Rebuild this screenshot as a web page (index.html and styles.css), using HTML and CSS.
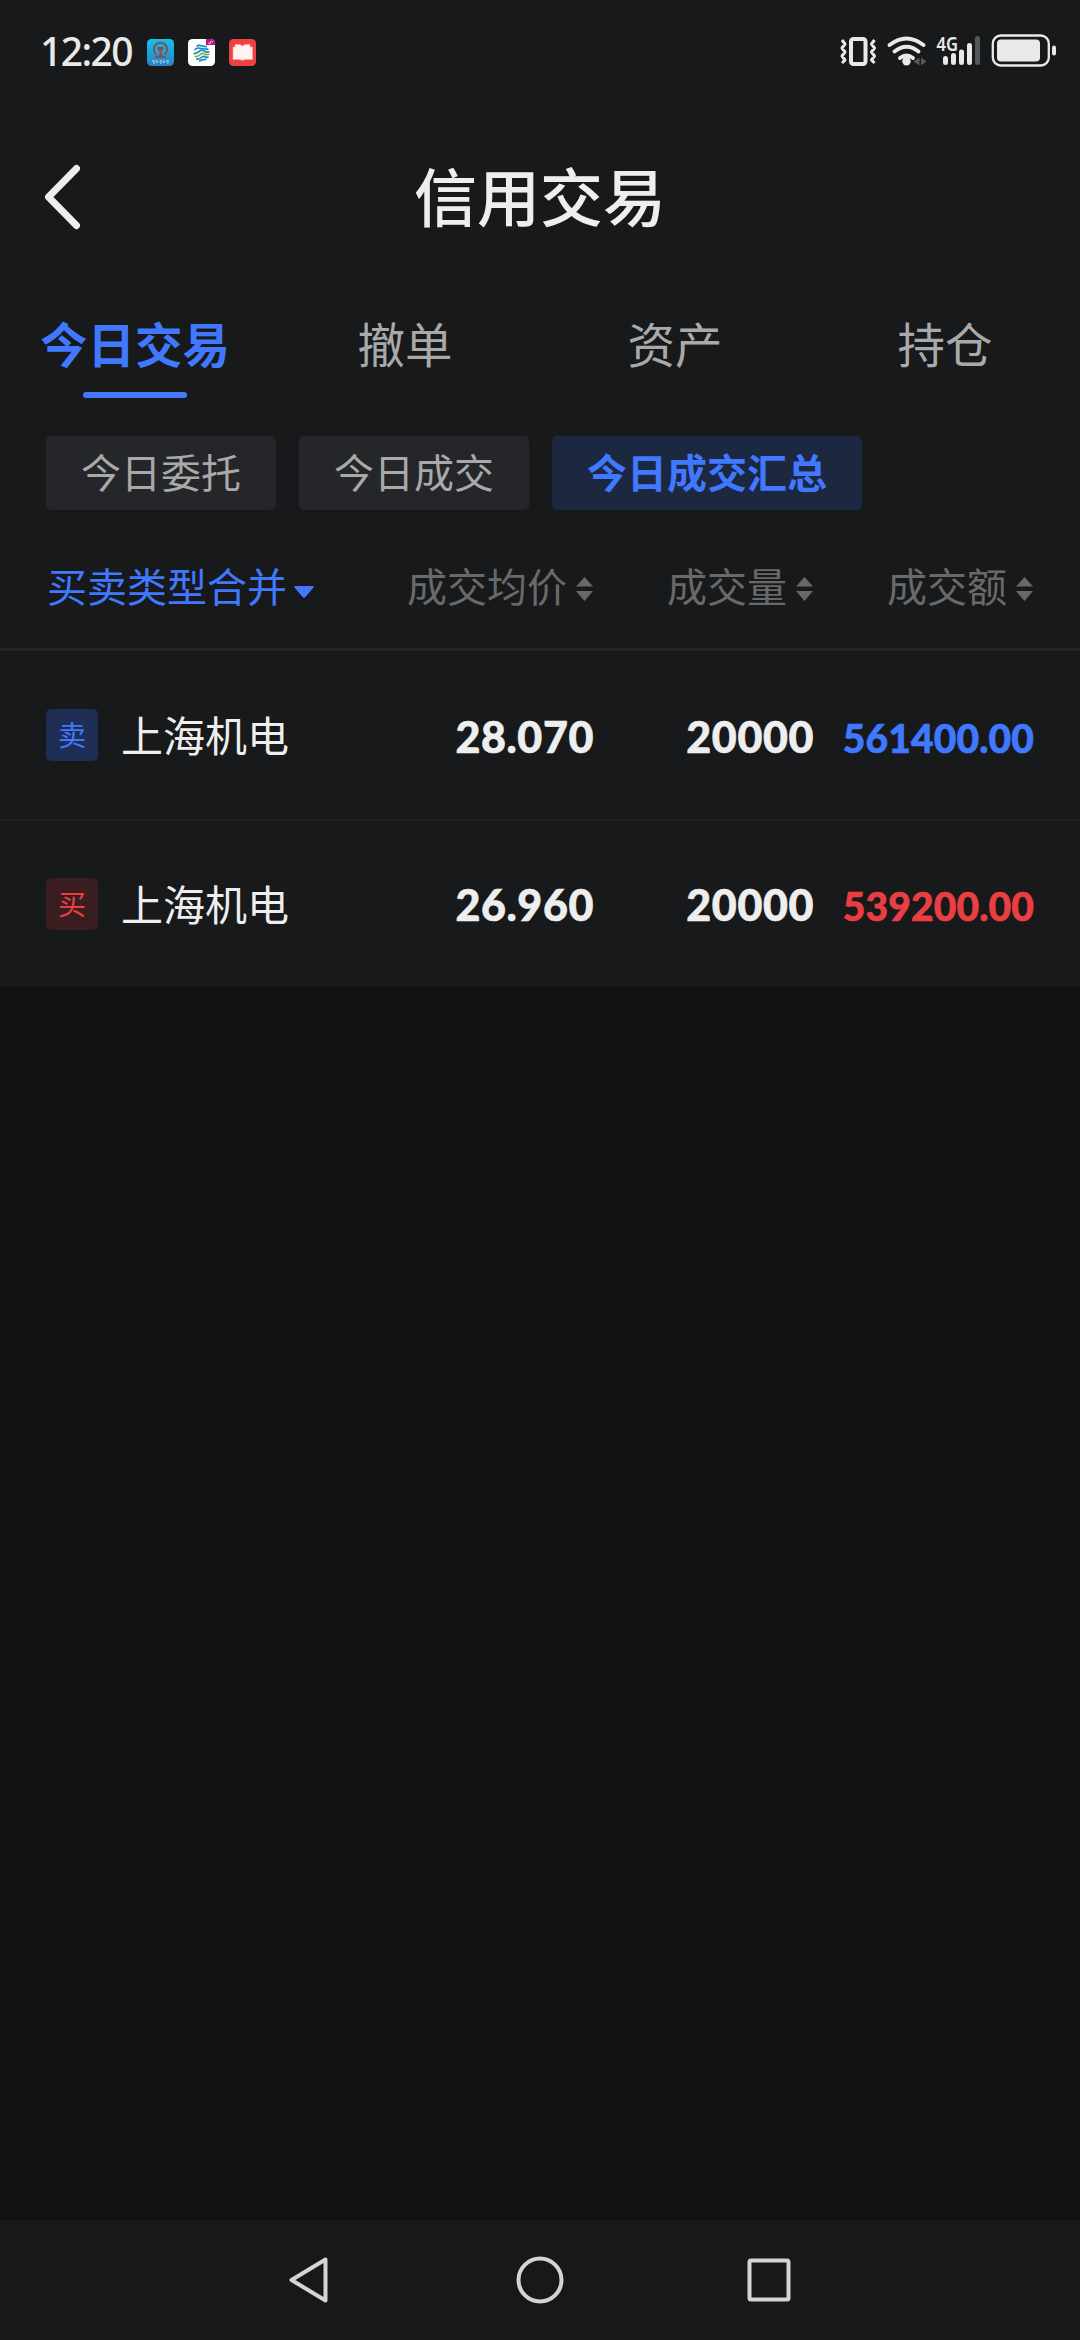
FILE: index.html
```html
<!DOCTYPE html>
<html lang="zh-CN">
<head>
<meta charset="utf-8">
<title>信用交易</title>
<link rel="stylesheet" href="styles.css">
</head>
<body>
<div class="screen">
  <div class="panel">
    <div class="status">
      <span class="clock">12:20</span>
      <div class="notices">
        <svg class="app" viewBox="0 0 27 27">
          <defs><linearGradient id="sky" x1="0" y1="0" x2="0" y2="1"><stop offset="0" stop-color="#0fc4ee"/><stop offset="1" stop-color="#2f7fc4"/></linearGradient></defs>
          <rect width="27" height="27" rx="4.5" fill="url(#sky)"/>
          <path d="M9.500 15.500A6.600 6.600 0 1 1 17.500 15.500" fill="none" stroke="#8c4d52" stroke-width="2"/>
          <path d="M10.500 8h6v2.500l-2 1.500v4l4.500 1.500v1.500h-11v-1.500l4.500-1.500v-4l-2-1.500z" fill="#8c4d52"/>
          <path d="M5 22h3.500M6 24h2M10 21.500v2.500M12.500 22h3M13 24h2M17 21.500v2.500M19 22h3M20 24h1.500" stroke="#b9e2f6" stroke-width="1.200"/>
        </svg>
        <svg class="app" viewBox="0 0 27 27">
          <rect width="27" height="27" rx="4.500" fill="#fff"/>
          <path d="M18 0h4.500A4.500 4.500 0 0 1 27 4.500V6h-9z" fill="#c0127f"/>
          <path d="M20 3.500l2 1.500 1-3 2 1" fill="none" stroke="#f3b5dc" stroke-width="1"/>
          <g fill="none" stroke-width="1.700">
            <path d="M8.500 7.500C12 4 14 8.500 19 7.500M6.500 11C11 6 14 11.500 20.500 10" stroke="#1b86c4"/>
            <path d="M5.500 14.500C12 15 11 9.500 15 11.500S19 13.500 21.500 12.500" stroke="#1b86c4"/>
            <path d="M6.500 17.500C13 18.500 12 13 15.500 14.500S19.500 16 21.500 15" stroke="#7bb92c"/>
            <path d="M8 20C14 21 13.500 16 16.500 17.500S19.500 18.500 20.500 18M11 22C14 22 15 19.500 18.500 20.500" stroke="#1b86c4"/>
          </g>
        </svg>
        <svg class="app" viewBox="0 0 27 27">
          <rect width="27" height="27" rx="4.500" fill="#ef4142"/>
          <path d="M6 5.500h5l2.500 1.500 2.500-1.500h5V8h2.500v12.500h-7.500l-2.500 1-2.500-1H4V8h2z" fill="#fff3f0" stroke="#f9a6a2" stroke-width=".6"/>
        </svg>
      </div>
      <svg class="signals" viewBox="836 30 222 44">
        <g fill="none" stroke="#e9e9e9">
          <rect x="850" y="39" width="14.500" height="25" rx="2.500" stroke-width="4"/>
          <path d="M841 42l3 4-3 4 3 4-3 4 3 4-3 3M873.500 42l-3 4 3 4-3 4 3 4-3 4 3 3" transform="translate(0 -2)" stroke-width="3" stroke-linejoin="round"/>
          <path d="M888.500 44.500Q905.500 31.500 922.500 44.500M893.500 51Q905.500 41.500 917.500 51M899 57.500Q905.500 52.500 912 57.500" transform="translate(0 .5)" stroke-width="3.800" stroke-linecap="round"/>
        </g>
        <circle cx="905.500" cy="61.200" r="4.200" fill="#e9e9e9"/>
        <path d="M918.500 57.500v8l-6-4zM920 57.500v8l5.500-4z" fill="#55585a"/>
        <text class="net" x="935.500" y="50.500" textLength="21.500" lengthAdjust="spacingAndGlyphs">4G</text>
        <g stroke-width="5" stroke-linecap="round" stroke="#e9e9e9">
          <path d="M944.500 58.500v4M952.500 55.500v7M960.500 52v10.500M968.500 45.500v17"/>
          <path d="M976.500 38.500v24" stroke="#55585a"/>
        </g>
        <rect x="991.800" y="35.500" width="56" height="30" rx="8" fill="none" stroke="#e9e9e9" stroke-width="2.300"/>
        <rect x="996" y="39.500" width="43" height="22" rx="4" fill="#e9e9e9"/>
        <rect x="1051" y="45.500" width="4" height="10" rx="2" fill="#e9e9e9"/>
      </svg>
    </div>
    <header class="titlebar">
      <svg class="back" viewBox="0 0 40 70"><path d="M36.500 6.500L8.500 35l28 28.500"/></svg>
      <h1>信用交易</h1>
    </header>
    <nav class="tabs">
      <a class="tab on">今日交易</a><a class="tab">撤单</a><a class="tab">资产</a><a class="tab">持仓</a>
    </nav>
    <div class="pills">
      <a class="pill">今日委托</a><a class="pill">今日成交</a><a class="pill on">今日成交汇总</a>
    </div>
    <div class="row head">
      <span class="filter">买卖类型合并<svg class="caret" viewBox="0 0 20 12"><path d="M1 0h18q1 .5 .5 1.500l-8 9.500q-1.500 1.500-3 0l-8-9.500Q0 .5 1 0z"/></svg></span>
      <span class="cell">成交均价<svg class="sort" viewBox="0 0 17 24"><path d="M8.500 0L17 9.500H0zM0 14h17L8.500 24z"/></svg></span>
      <span class="cell">成交量<svg class="sort" viewBox="0 0 17 24"><path d="M8.500 0L17 9.500H0zM0 14h17L8.500 24z"/></svg></span>
      <span class="cell">成交额<svg class="sort" viewBox="0 0 17 24"><path d="M8.500 0L17 9.500H0zM0 14h17L8.500 24z"/></svg></span>
    </div>
    <div class="row">
      <span class="stock"><b class="tag sell">卖</b><span class="name">上海机电</span></span>
      <span class="num">28.070</span><span class="num">20000</span><span class="num amount sell-text">561400.00</span>
    </div>
    <div class="row">
      <span class="stock"><b class="tag buy">买</b><span class="name">上海机电</span></span>
      <span class="num">26.960</span><span class="num">20000</span><span class="num amount buy-text">539200.00</span>
    </div>
  </div>
  <div class="sysnav">
    <svg viewBox="0 0 48 48"><path d="M38.500 3.500L4.500 24l34 20.500z"/></svg>
    <svg viewBox="0 0 48 48"><circle cx="24" cy="24" r="21.500"/></svg>
    <svg viewBox="0 0 48 48"><rect x="4.500" y="4.500" width="39" height="39" rx="1.500"/></svg>
  </div>
</div>
</body>
</html>
```
FILE: styles.css
```css
* { box-sizing: border-box; }
body {
  margin: 0;
  background: #101113;
  color: #eee;
  font-family: "Noto Sans CJK SC", sans-serif;
}
.screen {
  width: 1080px;
  height: 2340px;
  display: flex;
  flex-direction: column;
  justify-content: space-between;
}
.panel { background: #17191b; }
svg { display: block; flex: none; }

.status {
  height: 104px;
  padding: 0 21px 0 40px;
  display: flex;
  align-items: center;
}
.clock {
  width: 107px;
  padding-bottom: 2px;
  font: 500 39px/50px "Noto Sans", sans-serif;
  letter-spacing: -1.6px;
  color: #e9e9e9;
}
.notices { display: flex; gap: 14px; flex: 1; }
.app { width: 27px; height: 27px; }
.signals { width: 222px; height: 44px; }
.net { font: 600 19px "Noto Sans", sans-serif; fill: #e9e9e9; }

.titlebar {
  height: 186px;
  display: grid;
  grid-template-columns: 80px 1fr 80px;
  align-items: center;
}
.back { width: 40px; height: 70px; margin-left: 40px; fill: none; stroke: #eee; stroke-width: 7; stroke-linecap: round; stroke-linejoin: round; }
h1 { margin: 0; padding-bottom: 7px; font-size: 63px; line-height: 80px; font-weight: 500; text-align: center; }

.tabs { display: grid; grid-template-columns: repeat(4, 270px); height: 146px; padding-top: 23px; }
.tab {
  display: flex;
  flex-direction: column;
  align-items: center;
  font-size: 47.500px;
  line-height: 60px;
  color: #a9a9a9;
}
.tab.on { color: #4079ff; font-weight: 700; }
.tab.on::after { content: ""; width: 104px; height: 6px; margin-top: 19px; border-radius: 3px; background: #4079ff; }

.pills { display: flex; gap: 23px; padding-left: 46px; }
.pill {
  height: 74px;
  padding: 0 35px;
  border-radius: 5px;
  background: #25262a;
  color: #a9a9a9;
  font-size: 40px;
  line-height: 71px;
}
.pill.on { background: #1c2740; color: #4079ff; font-weight: 700; }

.row {
  height: 168px;
  display: grid;
  grid-template-columns: 347px 200px 220px 220px;
  align-items: center;
  padding-left: 46px;
  border-top: 1px solid #222325;
}
.row.head { height: 141px; border-top: 0; border-bottom: 3px solid #252628; font-size: 40px; line-height: 60px; padding-top: 12px; }
.head + .row { border-top: 0; }
.filter, .cell, .stock { display: flex; align-items: center; white-space: nowrap; }
.filter { padding-left: 1px; color: #4079ff; }
.caret { width: 20px; height: 12px; margin: 13px 0 0 7px; fill: #4079ff; }
.cell { justify-content: flex-end; color: #696969; }
.sort { width: 17px; height: 24px; margin: 7px 0 0 9px; fill: #696969; }
.stock { font-size: 42px; line-height: 60px; }
.name { padding: 0 0 2px 1px; }
.tag { width: 52px; height: 52px; margin-right: 22px; border-radius: 5px; font-size: 28px; line-height: 50px; font-weight: 400; text-align: center; }
.tag.sell { background: #1e2e54; color: #4079ff; }
.tag.buy { background: #3a1d20; color: #e93f43; }
.num {
  padding-top: 3px;
  margin-right: -1px;
  font: 900 43px/60px Lato, sans-serif;
  letter-spacing: .6px;
  text-align: right;
  -webkit-text-stroke: .6px currentColor;
}
.amount { padding-top: 5px; font-size: 39px; letter-spacing: .1px; }
.sell-text { color: #4079ff; }
.buy-text { color: #e93f43; }

.sysnav {
  height: 120px;
  background: #17181a;
  display: flex;
  align-items: center;
  justify-content: center;
  gap: 181px;
}
.sysnav svg { width: 48px; height: 48px; fill: none; stroke: #d4d4d4; stroke-width: 4; stroke-linejoin: round; }
```
